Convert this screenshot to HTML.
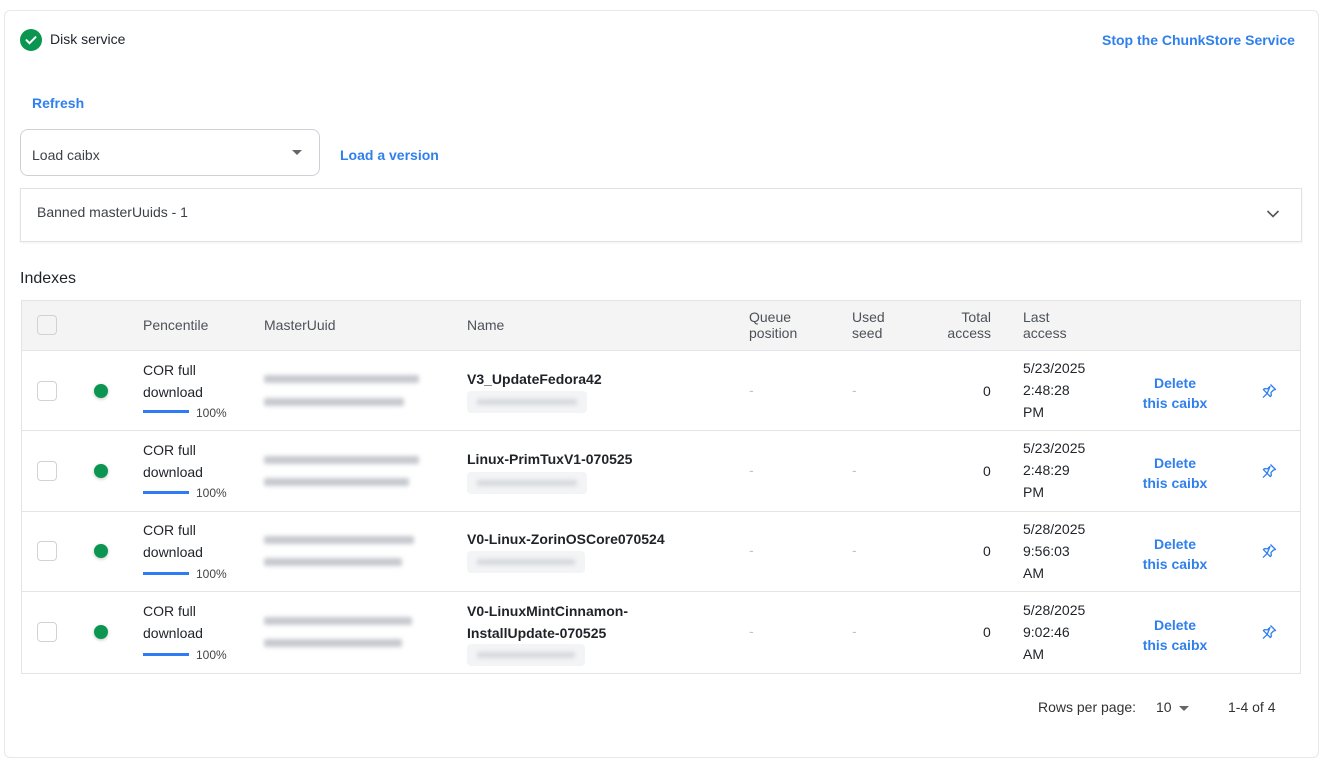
<!DOCTYPE html>
<html><head><style>
*{box-sizing:border-box;margin:0;padding:0}
body{width:1330px;height:772px;background:#fff;font-family:"Liberation Sans",sans-serif;color:#1f2328;font-size:14px;position:relative;overflow:hidden}
.a{position:absolute}
.card{left:4px;top:10px;width:1315px;height:748px;border:1px solid #e6e8eb;border-radius:6px}
.link{color:#2f80ed;font-weight:bold;font-size:14px}
.hdr{left:21px;top:300px;width:1280px;height:51px;background:#f4f4f4;border:1px solid #e2e4e7}
.ht{color:#4d5259;font-size:14px;line-height:16px}
.row{left:21px;width:1280px;border:1px solid #e2e4e7;border-top:none}
.cb{width:20px;height:20px;border:1px solid #cfd3d8;border-radius:4px;background:#fff}
.dot{width:14px;height:14px;border-radius:50%;background:#0a9650;box-shadow:0 1px 3px rgba(0,0,0,.25)}
.blur{background:#c6c9cf;filter:blur(2px);height:8px;border-radius:2px}
.tag{background:#f3f4f6;border-radius:4px;height:22px}
.t{font-size:14px;line-height:22px}
.dash{color:#c0c3c7}
</style></head><body>
<div class="a card"></div>
<svg class="a" style="left:20px;top:29px" width="22" height="22"><circle cx="11" cy="11" r="11" fill="#0a9650"/><path d="M6.5 11.2l3 3 6-6" stroke="#fff" stroke-width="2" fill="none" stroke-linecap="round"/></svg>
<div class="a" style="left:50px;top:31px;font-size:14px">Disk service</div>
<div class="a link" style="left:1102px;top:32px">Stop the ChunkStore Service</div>
<div class="a link" style="left:32px;top:95px">Refresh</div>
<div class="a" style="left:20px;top:129px;width:300px;height:47px;border:1px solid #cdd1d6;border-radius:8px"></div>
<div class="a" style="left:32px;top:147px;color:#3d4249">Load caibx</div>
<div class="a" style="left:292px;top:150px;width:0;height:0;border-left:5px solid transparent;border-right:5px solid transparent;border-top:5px solid #666"></div>
<div class="a link" style="left:340px;top:147px">Load a version</div>
<div class="a" style="left:20px;top:188px;width:1282px;height:54px;border:1px solid #e0e2e5;box-shadow:0 1px 2px rgba(0,0,0,.06)"></div>
<div class="a" style="left:37px;top:204px;color:#3d4249">Banned masterUuids - 1</div>
<svg class="a" style="left:1266px;top:209px" width="14" height="10"><path d="M1.5 2l5.5 5.5 5.5-5.5" stroke="#555" stroke-width="1.6" fill="none"/></svg>
<div class="a" style="left:20px;top:270px;font-size:16px">Indexes</div>

<div class="a hdr"></div>
<div class="a cb" style="left:37px;top:315px;background:transparent"></div>
<div class="a ht" style="left:143px;top:317px">Pencentile</div>
<div class="a ht" style="left:264px;top:317px">MasterUuid</div>
<div class="a ht" style="left:467px;top:317px">Name</div>
<div class="a ht" style="left:749px;top:309px">Queue<br>position</div>
<div class="a ht" style="left:852px;top:309px">Used<br>seed</div>
<div class="a ht" style="left:935px;top:309px;width:56px;text-align:right">Total<br>access</div>
<div class="a ht" style="left:1023px;top:309px">Last<br>access</div>

<!-- rows -->
<div class="a row" style="top:351px;height:80px"></div>
<div class="a row" style="top:431px;height:81px"></div>
<div class="a row" style="top:512px;height:80px"></div>
<div class="a row" style="top:592px;height:82px"></div>

<!-- row template values -->
<div class="a cb" style="left:37px;top:381px"></div>
<div class="a dot" style="left:94px;top:384px"></div>
<div class="a t" style="left:143px;top:359px">COR full<br>download</div>
<div class="a" style="left:143px;top:410px;width:46px;height:3px;background:#2f7bf5"></div>
<div class="a" style="left:196px;top:406px;font-size:12px;color:#444">100%</div>
<div class="a blur" style="left:264px;top:375px;width:155px"></div>
<div class="a blur" style="left:264px;top:398px;width:140px"></div>
<div class="a" style="left:467px;top:371px;font-weight:bold">V3_UpdateFedora42</div>
<div class="a tag" style="left:467px;top:391px;width:120px"></div><div class="a blur" style="left:477px;top:399px;width:100px;height:6px;background:#d6d8dc"></div>
<div class="a dash" style="left:749px;top:382px">-</div><div class="a dash" style="left:852px;top:382px">-</div>
<div class="a" style="left:983px;top:383px">0</div>
<div class="a t" style="left:1023px;top:357px">5/23/2025<br>2:48:28<br>PM</div>
<div class="a link" style="left:1140px;top:373px;width:70px;text-align:center;line-height:20px">Delete<br>this caibx</div>

<div class="a cb" style="left:37px;top:461px"></div>
<div class="a dot" style="left:94px;top:464px"></div>
<div class="a t" style="left:143px;top:439px">COR full<br>download</div>
<div class="a" style="left:143px;top:491px;width:46px;height:3px;background:#2f7bf5"></div>
<div class="a" style="left:196px;top:486px;font-size:12px;color:#444">100%</div>
<div class="a blur" style="left:264px;top:456px;width:155px"></div>
<div class="a blur" style="left:264px;top:478px;width:145px"></div>
<div class="a" style="left:467px;top:451px;font-weight:bold">Linux-PrimTuxV1-070525</div>
<div class="a tag" style="left:467px;top:472px;width:120px"></div><div class="a blur" style="left:477px;top:480px;width:100px;height:6px;background:#d6d8dc"></div>
<div class="a dash" style="left:749px;top:462px">-</div><div class="a dash" style="left:852px;top:462px">-</div>
<div class="a" style="left:983px;top:463px">0</div>
<div class="a t" style="left:1023px;top:437px">5/23/2025<br>2:48:29<br>PM</div>
<div class="a link" style="left:1140px;top:453px;width:70px;text-align:center;line-height:20px">Delete<br>this caibx</div>

<div class="a cb" style="left:37px;top:541px"></div>
<div class="a dot" style="left:94px;top:544px"></div>
<div class="a t" style="left:143px;top:519px">COR full<br>download</div>
<div class="a" style="left:143px;top:572px;width:46px;height:3px;background:#2f7bf5"></div>
<div class="a" style="left:196px;top:567px;font-size:12px;color:#444">100%</div>
<div class="a blur" style="left:264px;top:536px;width:150px"></div>
<div class="a blur" style="left:264px;top:558px;width:138px"></div>
<div class="a" style="left:467px;top:531px;font-weight:bold">V0-Linux-ZorinOSCore070524</div>
<div class="a tag" style="left:467px;top:551px;width:118px"></div><div class="a blur" style="left:477px;top:559px;width:98px;height:6px;background:#d6d8dc"></div>
<div class="a dash" style="left:749px;top:542px">-</div><div class="a dash" style="left:852px;top:542px">-</div>
<div class="a" style="left:983px;top:543px">0</div>
<div class="a t" style="left:1023px;top:518px">5/28/2025<br>9:56:03<br>AM</div>
<div class="a link" style="left:1140px;top:534px;width:70px;text-align:center;line-height:20px">Delete<br>this caibx</div>

<div class="a cb" style="left:37px;top:622px"></div>
<div class="a dot" style="left:94px;top:625px"></div>
<div class="a t" style="left:143px;top:600px">COR full<br>download</div>
<div class="a" style="left:143px;top:653px;width:46px;height:3px;background:#2f7bf5"></div>
<div class="a" style="left:196px;top:648px;font-size:12px;color:#444">100%</div>
<div class="a blur" style="left:264px;top:617px;width:148px"></div>
<div class="a blur" style="left:264px;top:639px;width:138px"></div>
<div class="a" style="left:467px;top:600px;font-weight:bold;line-height:22px">V0-LinuxMintCinnamon-<br>InstallUpdate-070525</div>
<div class="a tag" style="left:467px;top:644px;width:118px"></div><div class="a blur" style="left:477px;top:652px;width:98px;height:6px;background:#d6d8dc"></div>
<div class="a dash" style="left:749px;top:623px">-</div><div class="a dash" style="left:852px;top:623px">-</div>
<div class="a" style="left:983px;top:624px">0</div>
<div class="a t" style="left:1023px;top:599px">5/28/2025<br>9:02:46<br>AM</div>
<div class="a link" style="left:1140px;top:615px;width:70px;text-align:center;line-height:20px">Delete<br>this caibx</div>

<!-- pins -->
<svg class="a" style="left:1261px;top:383px" width="16" height="16" viewBox="0 0 16 16"><path d="M9.5 1.5l5 5-2 .5-2.5 2.5.3 3-1 1L6.2 10.4 2 14.6M6.2 10.4L2.4 6.6l1-1 3 .3L9 3.5z" stroke="#2f80ed" stroke-width="1.3" fill="none" stroke-linejoin="round"/></svg>
<svg class="a" style="left:1261px;top:463px" width="16" height="16" viewBox="0 0 16 16"><path d="M9.5 1.5l5 5-2 .5-2.5 2.5.3 3-1 1L6.2 10.4 2 14.6M6.2 10.4L2.4 6.6l1-1 3 .3L9 3.5z" stroke="#2f80ed" stroke-width="1.3" fill="none" stroke-linejoin="round"/></svg>
<svg class="a" style="left:1261px;top:543px" width="16" height="16" viewBox="0 0 16 16"><path d="M9.5 1.5l5 5-2 .5-2.5 2.5.3 3-1 1L6.2 10.4 2 14.6M6.2 10.4L2.4 6.6l1-1 3 .3L9 3.5z" stroke="#2f80ed" stroke-width="1.3" fill="none" stroke-linejoin="round"/></svg>
<svg class="a" style="left:1261px;top:624px" width="16" height="16" viewBox="0 0 16 16"><path d="M9.5 1.5l5 5-2 .5-2.5 2.5.3 3-1 1L6.2 10.4 2 14.6M6.2 10.4L2.4 6.6l1-1 3 .3L9 3.5z" stroke="#2f80ed" stroke-width="1.3" fill="none" stroke-linejoin="round"/></svg>

<div class="a" style="left:1038px;top:699px;color:#333">Rows per page:</div>
<div class="a" style="left:1156px;top:699px;color:#333">10</div>
<div class="a" style="left:1179px;top:706px;width:0;height:0;border-left:5px solid transparent;border-right:5px solid transparent;border-top:5px solid #666"></div>
<div class="a" style="left:1228px;top:699px;color:#333">1-4 of 4</div>
</body></html>
